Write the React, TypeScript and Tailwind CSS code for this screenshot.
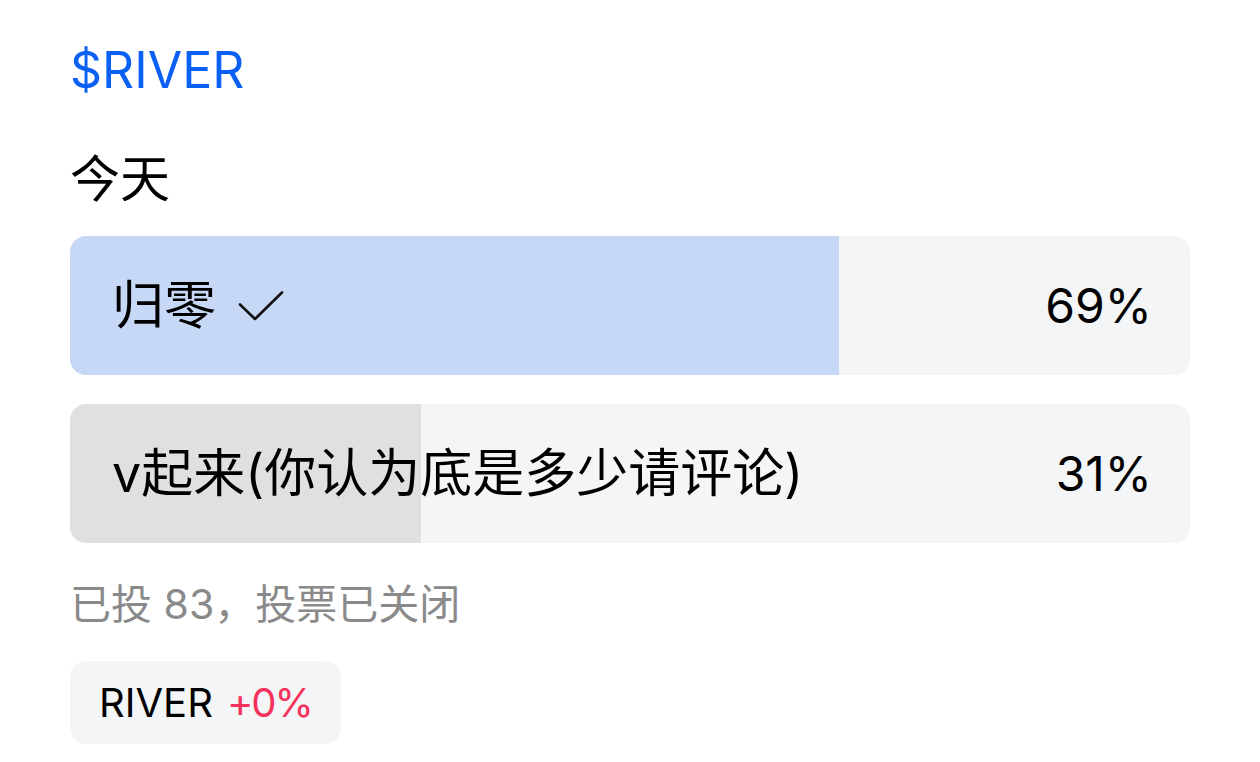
import React from "react";

const total = 83;
const options = [
  { label: "归零", votes: 57, pct: 69, voted: true },
  { label: "v起来(你认为底是多少请评论)", votes: 26, pct: 31, voted: false },
];

export default function App() {
  return (
    <div
      className="min-h-screen bg-white px-[70px] pt-[40px] text-black"
      style={{ fontFamily: 'Inter, "Noto Sans CJK SC", sans-serif' }}
    >
      <div className="text-[50px] leading-[60px] text-[#0b60f4]">$RIVER</div>

      <div className="mt-[49px] text-[50px] leading-[60px]">今天</div>

      <div className="mt-[27px] flex flex-col gap-[29px]">
        {options.map((o) => (
          <div
            key={o.label}
            className="relative h-[139px] overflow-hidden rounded-[16px] bg-[#f3f5f7]"
          >
            <div
              className={`absolute inset-y-0 left-0 ${o.voted ? "bg-[#c7d7f6]" : "bg-[#dfe0e2]"}`}
              style={{ width: `${(o.votes / total) * 100}%` }}
            />
            <div className="relative flex h-full items-center justify-between pl-[42px] pr-[38px]">
              <div className="flex items-center gap-[22px] text-[52px]">
                <span>{o.label}</span>
                {o.voted && (
                  <svg width="46" height="32" viewBox="0 0 46 32" fill="none" stroke="#111" strokeWidth="2.6" strokeLinecap="round" strokeLinejoin="round">
                    <path d="M2 14.5L17 29L44 2.5" />
                  </svg>
                )}
              </div>
              <span className="text-[48px]">{o.pct}%</span>
            </div>
          </div>
        ))}
      </div>

      <div className="mt-[36px] text-[41px] leading-[50px] text-[#8a8a8a]">已投 83，投票已关闭</div>

      <div className="mt-[32px] inline-flex h-[83px] items-center gap-[14px] rounded-[16px] bg-[#f3f5f7] px-[29px] text-[40px]">
        <span>RIVER</span>
        <span className="tracking-[-2px] text-[#f5325c]">+0%</span>
      </div>
    </div>
  );
}
